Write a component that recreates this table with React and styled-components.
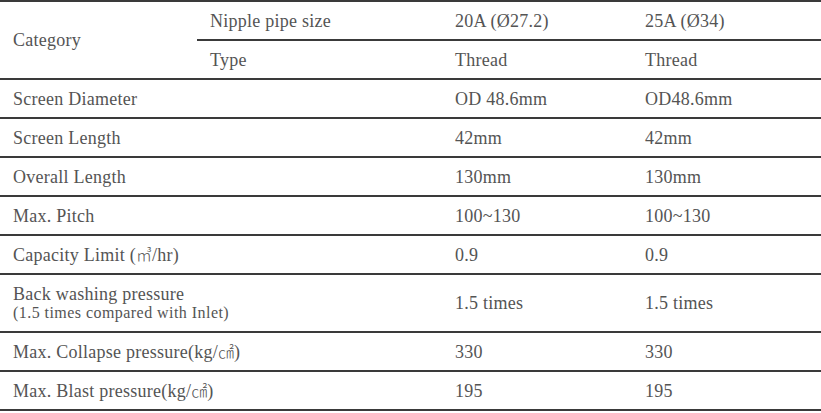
import React from 'react'
import styled, { createGlobalStyle } from 'styled-components'

const GlobalStyle = createGlobalStyle`
  html, body {
    margin: 0;
    padding: 0;
    background: #ffffff;
  }
`

const Table = styled.table`
  width: 821px;
  border-collapse: collapse;
  border-top: 2px solid #3a3a3a;
  font-family: "Liberation Serif", "DejaVu Serif", serif;
  font-size: 18px;
  letter-spacing: 0.25px;
  color: #545454;
  table-layout: fixed;
`

const Row = styled.tr`
  height: ${({ $tall }) => ($tall ? '58px' : '39px')};
`

const Cell = styled.td`
  padding: 0 0 0 13px;
  border-bottom: 2px solid #3a3a3a;
  vertical-align: middle;
  text-align: left;
  white-space: nowrap;
  line-height: 20px;
`

const Unit = styled.span`
  font-family: "Noto Sans CJK KR", sans-serif;
  font-size: 16px;
  font-weight: 300;
  letter-spacing: 0;
`

const Note = styled.span`
  display: block;
  font-size: 16px;
  letter-spacing: 0.45px;
  line-height: 18px;
`

const rows = [
  { label: 'Screen Diameter', a: 'OD 48.6mm', b: 'OD48.6mm' },
  { label: 'Screen Length', a: '42mm', b: '42mm' },
  { label: 'Overall Length', a: '130mm', b: '130mm' },
  { label: 'Max. Pitch', a: '100~130', b: '100~130' },
  { label: 'Capacity Limit (', unit: '㎥', tail: '/hr)', a: '0.9', b: '0.9' },
  {
    label: 'Back washing pressure',
    note: '(1.5 times compared with Inlet)',
    a: '1.5 times',
    b: '1.5 times',
  },
  { label: 'Max. Collapse pressure(kg/', unit: '㎠', tail: ')', a: '330', b: '330' },
  { label: 'Max. Blast pressure(kg/', unit: '㎠', tail: ')', a: '195', b: '195' },
]

export default function App() {
  return (
    <>
      <GlobalStyle />
      <Table>
        <colgroup>
          <col style={{ width: 197 }} />
          <col style={{ width: 245 }} />
          <col style={{ width: 190 }} />
          <col />
        </colgroup>
        <tbody>
          <Row>
            <Cell rowSpan={2}>Category</Cell>
            <Cell>Nipple pipe size</Cell>
            <Cell>20A (Ø27.2)</Cell>
            <Cell>25A (Ø34)</Cell>
          </Row>
          <Row>
            <Cell>Type</Cell>
            <Cell>Thread</Cell>
            <Cell>Thread</Cell>
          </Row>
          {rows.map((r) => (
            <Row key={r.label} $tall={!!r.note}>
              <Cell colSpan={2}>
                {r.label}
                {r.unit && <Unit>{r.unit}</Unit>}
                {r.tail}
                {r.note && <Note>{r.note}</Note>}
              </Cell>
              <Cell>{r.a}</Cell>
              <Cell>{r.b}</Cell>
            </Row>
          ))}
        </tbody>
      </Table>
    </>
  )
}
